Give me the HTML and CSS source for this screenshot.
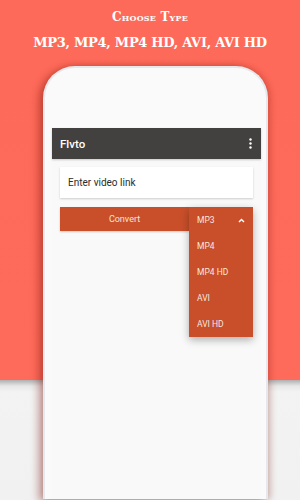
FILE: index.html
```html
<!DOCTYPE html>
<html lang="en">
<head>
    <meta charset="UTF-8">
    <meta name="viewport" content="width=device-width, initial-scale=1.0">
    <title>Flvto - Choose Type</title>
    <link rel="stylesheet" href="styles.css">
</head>
<body>
    <div class="banner">
        <h1 class="banner-title">Choose Type</h1>
        <p class="banner-sub">MP3, MP4, MP4 HD, AVI, AVI HD</p>
    </div>

    <div class="phone">
        <div class="screen">
            <div class="appbar">
                <span class="appbar-title">Flvto</span>
                <span class="appbar-menu">
                    <svg width="3" height="11" viewBox="0 0 3 11">
                        <circle cx="1.5" cy="1.5" r="1.2" fill="#fff"/>
                        <circle cx="1.5" cy="5.5" r="1.2" fill="#fff"/>
                        <circle cx="1.5" cy="9.5" r="1.2" fill="#fff"/>
                    </svg>
                </span>
            </div>

            <div class="content">
                <div class="link-input">Enter video link</div>

                <div class="convert-row">
                    <button class="convert-btn">Convert</button>
                    <div class="type-select">
                        <ul class="type-menu">
                            <li class="selected">
                                MP3
                                <svg width="7" height="5" viewBox="0 0 7 5">
                                    <path d="M1 4 L3.5 1.5 L6 4" stroke="#fff" stroke-width="1.4" fill="none"/>
                                </svg>
                            </li>
                            <li>MP4</li>
                            <li>MP4 HD</li>
                            <li>AVI</li>
                            <li>AVI HD</li>
                        </ul>
                    </div>
                </div>
            </div>
        </div>
    </div>
</body>
</html>
```

FILE: styles.css
```css
html, body {
    margin: 0;
    height: 100%;
}
body {
    width: 300px;
    height: 500px;
    overflow: hidden;
    font-family: Roboto, "Liberation Sans", sans-serif;
    background:
        linear-gradient(to bottom, transparent 0, transparent 380px, rgba(0, 0, 0, 0.28) 380px, rgba(0, 0, 0, 0.05) 386px, transparent 392px),
        linear-gradient(to bottom, #fe6a59 0, #ff6b5b 380px, #f3f3f3 380px, #f1f1f1 500px);
}

.banner {
    padding-top: 9px;
    text-align: center;
    color: #fff;
    font-family: "DejaVu Serif", serif;
    font-weight: bold;
}
.banner-title {
    margin: 0;
    font-size: 12px;
    line-height: 16px;
    font-variant: small-caps;
    letter-spacing: 0.2px;
}
.banner-sub {
    margin: 10px 0 0;
    font-size: 13px;
    line-height: 16px;
    letter-spacing: -0.3px;
}

.phone {
    margin: 15px 0 0 43px;
    width: 225px;
    height: 433px;
    box-sizing: border-box;
    padding: 60px 5px 0 9px;
    background: #fafafa;
    border: 2px solid #e6e8ec;
    border-bottom: none;
    border-radius: 32px 32px 0 0;
    box-shadow: -4px 2px 8px rgba(120, 20, 10, 0.45), 3px 0 6px rgba(120, 20, 10, 0.2);
}

.screen {
    background: #f9f9f9;
    height: 100%;
    margin-left: -2px;
}

.appbar {
    height: 31px;
    background: #434040;
    display: flex;
    align-items: center;
    justify-content: space-between;
    padding: 0 9px 0 8px;
    box-shadow: 0 1px 2px rgba(0, 0, 0, 0.2);
}
.appbar-title {
    color: #fff;
    font-size: 11.5px;
    font-weight: 500;
}
.appbar-menu {
    display: flex;
}

.content {
    padding: 8px 8px 0 8px;
}

.link-input {
    height: 31px;
    background: #fff;
    box-shadow: 0 1px 2px rgba(0, 0, 0, 0.18);
    display: flex;
    align-items: center;
    padding-left: 8px;
    font-size: 10px;
    color: #2b2b2b;
}

.convert-row {
    display: flex;
    margin-top: 9px;
    height: 24px;
}
.convert-btn {
    flex: 1;
    border: none;
    margin: 0;
    padding: 0;
    background: #c94f2a;
    color: #f4e3dc;
    font-family: inherit;
    font-size: 9px;
    box-shadow: 0 1px 2px rgba(0, 0, 0, 0.2);
}
.type-select {
    width: 64px;
    position: relative;
}
.type-menu {
    position: absolute;
    top: 0;
    left: 0;
    right: 0;
    margin: 0;
    padding: 0;
    list-style: none;
    background: #c94f2a;
    box-shadow: 0 3px 8px rgba(0, 0, 0, 0.3);
}
.type-menu li {
    height: 26px;
    display: flex;
    align-items: center;
    justify-content: space-between;
    padding: 0 8px;
    color: #f7e6df;
    font-size: 8.5px;
}
```
